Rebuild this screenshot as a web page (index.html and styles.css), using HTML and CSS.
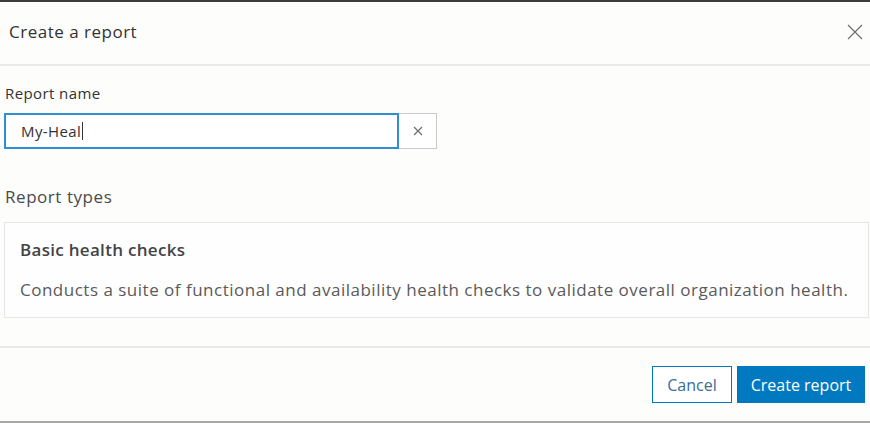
FILE: index.html
```html
<!DOCTYPE html>
<html lang="en">
<head>
<meta charset="utf-8">
<title>Create a report</title>
<link rel="stylesheet" href="styles.css">
</head>
<body>
<div class="dialog">
  <header class="header">
    <h1 class="title">Create a report</h1>
    <button class="close" aria-label="Close">
      <svg width="16" height="16" viewBox="0 0 16 16"><path d="M1 1L15 15M15 1L1 15" stroke="#6e6e6e" stroke-width="1.2" fill="none"/></svg>
    </button>
  </header>
  <main class="content">
    <label class="label" for="name">Report name</label>
    <div class="field">
      <div class="input"><span class="value">My-Heal</span><span class="caret"></span></div>
      <button class="clear" aria-label="Clear">
        <svg width="10" height="10" viewBox="0 0 10 10"><path d="M1 1L9 9M9 1L1 9" stroke="#6e6e6e" stroke-width="1.2" fill="none"/></svg>
      </button>
    </div>
    <div class="section-title">Report types</div>
    <div class="card">
      <div class="card-title">Basic health checks</div>
      <div class="card-desc">Conducts a suite of functional and availability health checks to validate overall organization health.</div>
    </div>
  </main>
  <footer class="footer">
    <button class="btn btn-outline">Cancel</button>
    <button class="btn btn-primary">Create report</button>
  </footer>
</div>
</body>
</html>
```
FILE: styles.css
```css
* { box-sizing: border-box; }
html, body { margin: 0; padding: 0; }
body {
  width: 870px;
  height: 423px;
  background: #fdfdfc;
  font-family: "Open Sans", "Noto Sans", sans-serif;
  color: #4a4a4a;
  overflow: hidden;
}
.dialog {
  height: 423px;
  display: flex;
  flex-direction: column;
  border-top: 2px solid #3d3d3d;
  border-bottom: 2px solid #a8a8a8;
}
.header {
  height: 64px;
  display: flex;
  align-items: center;
  justify-content: space-between;
  padding: 0 7px 0 9px;
  border-bottom: 2px solid #e9e9e9;
}
.title {
  margin: 0 0 3px 0;
  font-size: 17px;
  font-weight: 400;
  color: #323232;
  letter-spacing: 0.5px;
}
.close {
  border: 0;
  background: none;
  padding: 0;
  width: 16px;
  height: 16px;
  display: flex;
  margin-bottom: 3px;
}
.content {
  padding: 17px 1px 0 4px;
  display: flex;
  flex-direction: column;
}
.label {
  font-size: 15px;
  color: #323232;
  padding-left: 1px;
  line-height: 20px;
  letter-spacing: 0.4px;
}
.field {
  display: flex;
  margin-top: 10px;
  height: 36px;
}
.input {
  width: 395px;
  height: 36px;
  border: 2px solid #2e8fd3;
  background: #fff;
  display: flex;
  align-items: center;
  padding-left: 15px;
  font-size: 15px;
  color: #323232;
  letter-spacing: 0.4px;
}
.caret {
  display: inline-block;
  width: 1px;
  height: 18px;
  background: #323232;
  margin-left: 1px;
}
.clear {
  width: 38px;
  height: 36px;
  border: 1px solid #cacaca;
  border-left: 0;
  background: #fff;
  display: flex;
  align-items: center;
  justify-content: center;
  padding: 0;
}
.section-title {
  margin-top: 37px;
  font-size: 17px;
  line-height: 22px;
  color: #4a4a4a;
  padding-left: 1px;
  letter-spacing: 0.55px;
}
.card {
  margin-top: 14px;
  height: 96px;
  border: 1px solid #e6e6e6;
  background: #fefefe;
  padding: 16px 15px 0 15px;
}
.card-title {
  font-size: 17px;
  line-height: 22px;
  color: #444;
  font-weight: 600;
  letter-spacing: 0.3px;
}
.card-desc {
  margin-top: 18px;
  font-size: 17px;
  line-height: 22px;
  color: #5a5a5a;
  white-space: nowrap;
  letter-spacing: 0.5px;
}
.footer {
  margin-top: auto;
  height: 75px;
  border-top: 2px solid #e9e9e9;
  display: flex;
  justify-content: flex-end;
  align-items: flex-start;
  gap: 5px;
  padding: 18px 5px 0 0;
}
.btn {
  font-family: inherit;
  font-size: 16px;
  height: 37px;
  padding: 0;
  cursor: pointer;
}
.btn-outline {
  width: 80px;
  background: #fff;
  color: #3a6d96;
  border: 1px solid #0079c1;
}
.btn-primary {
  width: 128px;
  background: #0079c1;
  color: #fff;
  border: 1px solid #0079c1;
}
```
